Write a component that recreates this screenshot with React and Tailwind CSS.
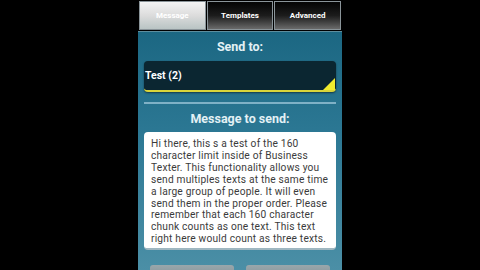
import React from "react";

const tabs = [
  { label: "Message", active: true },
  { label: "Templates" },
  { label: "Advanced" },
];

const lines = [
  "Hi there, this s a test of the 160",
  "character limit inside of Business",
  "Texter. This functionality allows you",
  "send multiples texts at the same time",
  "a large group of people. It will even",
  "send them in the proper order. Please",
  "remember that each 160 character",
  "chunk counts as one text. This text",
  "right here would count as three texts.",
];

function Tab({ label, active }) {
  return (
    <div
      className={`flex-1 flex items-center justify-center border border-[#8a9499] text-[8px] font-bold ${
        active
          ? "bg-gradient-to-b from-[#f4f4f4] via-[#dcdcdc] to-[#b9c4c4] text-white"
          : "bg-gradient-to-b from-[#050505] via-[#1c1c1c] to-[#6b6b6b] text-white"
      }`}
    >
      {label}
    </div>
  );
}

export default function App() {
  return (
    <div
      className="w-[480px] h-[270px] bg-black flex justify-center overflow-hidden"
      style={{ fontFamily: "Roboto, 'Open Sans', sans-serif" }}
    >
      <div className="w-[204px] h-full flex flex-col bg-gradient-to-b from-[#16627d] via-[#2c7894] to-[#4b8fa6]">
        <div className="h-[32px] shrink-0 flex border-b border-[#5d8e9e] bg-black p-px gap-px">
          {tabs.map((t) => (
            <Tab key={t.label} {...t} />
          ))}
        </div>

        <div className="shrink-0 text-center text-[#e3f1f5] font-bold text-[12.5px] mt-[6px] leading-[18px]">
          Send to:
        </div>

        <div className="shrink-0 mx-[6px] mt-[5px] h-[31px] relative rounded-[4px] bg-[#0b2631] border-b-2 border-[#d9d43a] flex items-center pl-[1px] shadow-[0_1px_2px_rgba(0,0,0,0.5)]">
          <span className="text-white font-bold text-[10.5px]">Test (2)</span>
          <svg
            className="absolute right-[1px] bottom-0"
            width="12"
            height="12"
            viewBox="0 0 12 12"
          >
            <polygon points="12,0 12,12 0,12" fill="#f1ec2e" />
          </svg>
        </div>

        <div className="shrink-0 mx-[6px] mt-[10px] h-[2px] bg-[#7fb1c6]" />

        <div className="shrink-0 text-center text-[#e3f1f5] font-bold text-[12.5px] mt-[6px] leading-[18px]">
          Message to send:
        </div>

        <div className="shrink-0 mx-[6px] mt-[4px] h-[118px] bg-white rounded-[4px] px-[7px] pt-[6px] text-[#3b3b3b] text-[10.2px] leading-[11.9px] tracking-[0.2px] border-b-2 border-[#9fb7c1]">
          {lines.map((l) => (
            <div key={l} className="whitespace-nowrap">
              {l}
            </div>
          ))}
        </div>

        <div className="shrink-0 flex gap-[12px] px-[12px] mt-[15px]">
          <div className="flex-1 h-[20px] rounded-t-[3px] bg-gradient-to-b from-[#9aa7ab] to-[#7c8a8f]" />
          <div className="flex-1 h-[20px] rounded-t-[3px] bg-gradient-to-b from-[#9aa7ab] to-[#7c8a8f]" />
        </div>
      </div>
    </div>
  );
}
